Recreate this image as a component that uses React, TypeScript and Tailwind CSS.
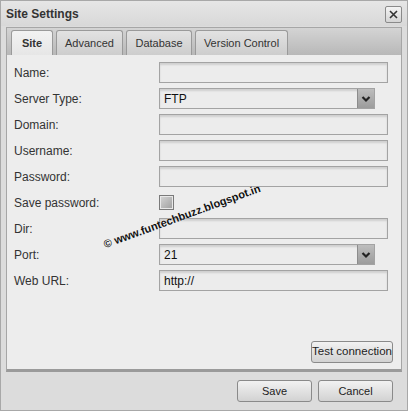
import React from 'react'

const rows: { label: string; kind: 'text' | 'select' | 'check'; value?: string }[] = [
  { label: 'Name:', kind: 'text' },
  { label: 'Server Type:', kind: 'select', value: 'FTP' },
  { label: 'Domain:', kind: 'text' },
  { label: 'Username:', kind: 'text' },
  { label: 'Password:', kind: 'text' },
  { label: 'Save password:', kind: 'check' },
  { label: 'Dir:', kind: 'text' },
  { label: 'Port:', kind: 'select', value: '21' },
  { label: 'Web URL:', kind: 'text', value: 'http://' },
]

const tabs = ['Site', 'Advanced', 'Database', 'Version Control']

function Chevron() {
  return (
    <svg width="10" height="8" viewBox="0 0 10 8">
      <path d="M1.5 2 L5 5.5 L8.5 2" fill="none" stroke="#222" strokeWidth="2.2" />
    </svg>
  )
}

function Field({ kind, value }: { kind: string; value?: string }) {
  if (kind === 'check') {
    return (
      <div className="w-[15px] h-[15px] border border-[#7a7a7a] bg-gradient-to-br from-[#d6d6d6] to-[#9e9e9e] shadow-[inset_0_0_0_1px_#e8e8e8]" />
    )
  }
  if (kind === 'select') {
    return (
      <div className="w-[216px] h-[21px] flex border border-[#a3a3a3] bg-[#ececec] shadow-[inset_0_2px_2px_rgba(0,0,0,0.12)]">
        <div className="flex-1 pl-[4px] leading-[20px] text-[12px] text-[#111]">{value}</div>
        <div className="w-[17px] flex items-center justify-center bg-gradient-to-b from-[#bdbdbd] to-[#9c9c9c] border-l border-[#8c8c8c]">
          <Chevron />
        </div>
      </div>
    )
  }
  return (
    <div className="w-[229px] h-[21px] border border-[#a3a3a3] bg-[#ececec] shadow-[inset_0_2px_2px_rgba(0,0,0,0.12)] pl-[4px] leading-[20px] text-[12px] text-[#111]">
      {value}
    </div>
  )
}

export default function App() {
  return (
    <div
      className="relative w-[408px] h-[411px] bg-[#dcdcdc] border border-[#a8a8a8] overflow-hidden"
      style={{ fontFamily: '"Liberation Sans", Arial, sans-serif' }}
    >
      {/* Title bar */}
      <div className="h-[25px] flex items-center justify-between pl-[5px] pr-[5px] bg-gradient-to-b from-[#e6e6e6] to-[#d8d8d8]">
        <span className="text-[12px] font-bold text-[#333]">Site Settings</span>
        <div className="w-[17px] h-[17px] mt-[1px] flex items-center justify-center border border-[#8a8a8a] rounded-[2px] bg-gradient-to-b from-[#f4f4f4] to-[#d4d4d4]">
          <svg width="9" height="9" viewBox="0 0 9 9">
            <path d="M1 1 L8 8 M8 1 L1 8" stroke="#333" strokeWidth="1.6" />
          </svg>
        </div>
      </div>

      {/* Tab strip */}
      <div className="mx-[5px] mt-[1px] h-[28px] flex items-end gap-[3px] pl-[4px] border-t border-x border-[#a6a6a6] bg-gradient-to-b from-[#d4d4d4] to-[#b8b8b8]">
        {tabs.map((t, i) => (
          <div
            key={t}
            className={`h-[25px] flex items-center justify-center rounded-t-[3px] border border-b-0 border-[#9a9a9a] text-[11px] text-[#333] ${
              i === 0
                ? 'w-[42px] bg-gradient-to-b from-[#f2f2f2] to-[#e6e6e6] font-bold'
                : 'bg-gradient-to-b from-[#e2e2e2] to-[#cdcdcd] ' +
                  (i === 1 ? 'w-[67px]' : i === 2 ? 'w-[66px]' : 'w-[93px]')
            }`}
          >
            {t}
          </div>
        ))}
      </div>

      {/* Content panel */}
      <div className="relative mx-[5px] h-[317px] bg-[#ededed] border-x border-[#a6a6a6] border-b-[3px] border-b-[#9a9a9a]">
        <div className="flex flex-col gap-[5px] pt-[7px] pl-[7px]">
          {rows.map((r) => (
            <div key={r.label} className="flex items-center h-[21px]">
              <div className="w-[145px] text-[12px] text-[#333]">{r.label}</div>
              <Field kind={r.kind} value={r.value} />
            </div>
          ))}
        </div>

        <div className="absolute right-[8px] bottom-[6px]">
          <button className="w-[82px] h-[22px] rounded-[3px] border border-[#8a8a8a] bg-gradient-to-b from-[#f2f2f2] to-[#d2d2d2] text-[11.5px] text-[#222] leading-none">
            Test connection
          </button>
        </div>

        {/* watermark */}
        <span className="absolute left-[92px] top-[153px] -rotate-[20deg] text-[11px] font-bold text-[#111] whitespace-nowrap [text-shadow:0_0_1px_#fff]">
          © www.funtechbuzz.blogspot.in
        </span>
      </div>

      {/* Bottom buttons */}
      <div className="flex justify-end gap-[6px] pr-[14px] pt-[8px]">
        <button className="w-[75px] h-[22px] rounded-[3px] border border-[#8a8a8a] bg-gradient-to-b from-[#f2f2f2] to-[#d2d2d2] text-[11px] text-[#222]">
          Save
        </button>
        <button className="w-[75px] h-[22px] rounded-[3px] border border-[#8a8a8a] bg-gradient-to-b from-[#f2f2f2] to-[#d2d2d2] text-[11px] text-[#222]">
          Cancel
        </button>
      </div>
    </div>
  )
}
